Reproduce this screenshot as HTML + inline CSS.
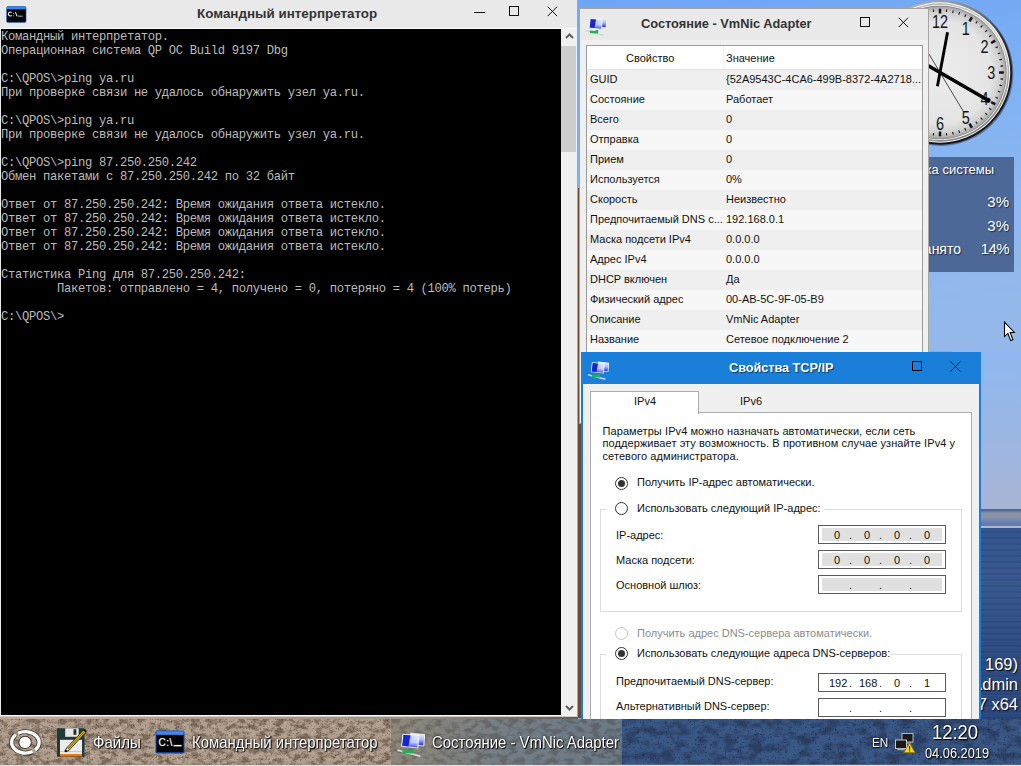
<!DOCTYPE html>
<html><head><meta charset="utf-8">
<style>
*{margin:0;padding:0;box-sizing:border-box}
html,body{width:1021px;height:766px;overflow:hidden;background:#6ca4f4;font-family:"Liberation Sans",sans-serif}
.a{position:absolute}
.t{position:absolute;white-space:pre;line-height:1}
/* wallpaper */
#wall{left:0;top:0;width:1021px;height:766px;background:linear-gradient(172deg,#6aa2f4 0px,#72a8f4 120px,#84b4f2 260px,#8eb8f0 350px,#94b8ea 450px)}
#strip{left:578px;top:188px;width:3px;height:530px;background:#6a4a30}
#lake{left:981px;top:352px;width:40px;height:367px;background:repeating-linear-gradient(180deg,rgba(255,255,255,0) 0px,rgba(255,255,255,0) 3px,rgba(10,20,60,0.18) 4px,rgba(120,150,210,0.12) 6px) 0 176px/100% 191px no-repeat,linear-gradient(180deg,#8eb8f0 0px,#98b6e6 60px,#a2b6dc 120px,#a8b4d4 157px,#4a6290 157px,#56709c 159px,#8a92a6 161px,#8c94a8 165px,#6a80b4 170px,#6078b0 174px,#b8bcc6 174px,#b0b4c0 176px,#34548e 176px,#38588e 230px,#2e4c82 300px,#2a487c 367px)}
/* cmd window */
#cmd{left:0;top:0;width:578px;height:717px;background:#e9e9e9;border-right:1px solid #a8a4a0}
#con{left:1px;top:29px;width:560px;height:686px;background:#000}
#conline{left:0;top:28px;width:577px;height:1px;background:#fafafa}
#conbot{left:0;top:715px;width:577px;height:1px;background:#fafafa}
#conbot2{left:0;top:716px;width:577px;height:1px;background:#c8c8c8}
#sb{left:561px;top:29px;width:16px;height:686px;background:#f0f0f0}
#thumb{left:561px;top:46px;width:15px;height:106px;background:#cdcdcd}
.mono{font-family:"Liberation Mono",monospace;font-size:12.2px;letter-spacing:-0.32px;color:#bcbcbc;line-height:14px;white-space:pre}
/* status window */
#st{left:579px;top:8px;width:350px;height:416px;background:#f0f0f0;border:1px solid #a8a4a0}
#sttitle{left:580px;top:9px;width:348px;height:31px;background:#e9e9e9}
#tbl{left:586px;top:45px;width:337px;height:310px;background:#fff;border:1px solid #9a9a9a}
.row{position:absolute;left:587px;width:335px;height:20px}
.nm{position:absolute;left:590px;font-size:11px;color:#111;white-space:pre;line-height:1}
.vl{position:absolute;left:726px;font-size:11px;color:#111;white-space:pre;line-height:1}
/* tcp window */
#tcp{left:581px;top:352px;width:400px;height:380px;background:#1a7fd8}
#tcpbody{left:583px;top:384px;width:396px;height:340px;background:#f0f0f0}
.ui{position:absolute;font-size:11px;color:#111;white-space:pre;line-height:1}
.radio{position:absolute;width:13px;height:13px;border-radius:50%;border:1px solid #333;background:#fff}
.radio.on::after{content:"";position:absolute;left:2px;top:2px;width:7px;height:7px;border-radius:50%;background:#333}
.ipbox{position:absolute;left:818px;width:128px;height:19px;border:1px solid #5a5a5a;background:#fff}
.ipfill{position:absolute;left:3px;top:2px;width:120px;height:13px;background:#e0e0e0}
.ipt{position:absolute;font-size:11px;color:#111;line-height:1;white-space:pre}
.grp{position:absolute;border:1px solid #dcdcdc}
/* taskbar */
#task{left:0;top:717px;width:1021px;height:49px;background:linear-gradient(90deg,#9a8474 0%,#a08a7a 30%,#8c7e74 38%,#6e7a82 45%,#5c6e80 60%,#344a6a 62%,#2e4468 100%)}
.tb{position:absolute;font-size:15px;color:#fff;white-space:pre;line-height:1;text-shadow:1px 1px 1px #000,0 0 2px #000}
</style></head><body>
<svg width="0" height="0" style="position:absolute"><defs>
<linearGradient id="mon" x1="0" y1="0" x2="1" y2="0.15"><stop offset="0" stop-color="#1828c0"/><stop offset="0.48" stop-color="#0a20e0"/><stop offset="0.56" stop-color="#c4d0ff"/><stop offset="1" stop-color="#dce4ff"/></linearGradient>
<linearGradient id="monv" x1="0" y1="0" x2="0" y2="1"><stop offset="0" stop-color="#fff" stop-opacity="0"/><stop offset="0.6" stop-color="#2030e0" stop-opacity="0.1"/><stop offset="1" stop-color="#1020d0" stop-opacity="0.75"/></linearGradient>
<linearGradient id="mon2" x1="0" y1="0" x2="0" y2="1"><stop offset="0" stop-color="#e4eaff"/><stop offset="0.5" stop-color="#a8b8ff"/><stop offset="1" stop-color="#2030d8"/></linearGradient>
<symbol id="net" viewBox="0 0 22 20">
<polygon points="10.8,1.6 22.2,2.8 21.4,12.1 10.5,11" fill="#f2f0e8"/>
<polygon points="11.6,2.5 21.4,3.6 20.7,11.2 11.3,10.2" fill="url(#mon2)"/>
<polygon points="4.9,2.3 17.6,3.3 16.9,13.6 3.9,12.1" fill="#f4f2ea"/>
<polygon points="5.6,3.1 16.8,4 16.2,12.8 4.7,11.4" fill="url(#mon)"/>
<polygon points="5.6,3.1 16.8,4 16.2,12.8 4.7,11.4" fill="url(#monv)"/>
<path d="M1 14.8 L18.5 19.3" stroke="#d0d4d4" stroke-width="1.4"/>
<polygon points="4.8,14.6 9.5,15 12.5,13.8 13.3,14.6 13,17.4 9.5,17.2 5,17.2" fill="#22b050"/>
</symbol>
<symbol id="cmdic" viewBox="0 0 30 24">
<rect x="0.5" y="0.5" width="29" height="23" rx="1.5" fill="#1a4ab0"/>
<rect x="1.5" y="1.3" width="27" height="3.6" fill="#3a8cf0"/>
<rect x="1.5" y="4.9" width="27" height="17.3" fill="#000"/>
<text x="3.6" y="16.2" font-family="Liberation Sans" font-size="10" letter-spacing="0.5" fill="#fff" stroke="#fff" stroke-width="0.2">C:\</text><rect x="18.6" y="14.9" width="8" height="1.5" fill="#fff"/>
</symbol>
</defs></svg>
<div id="wall" class="a"></div>
<div id="strip" class="a"></div>
<div id="lake" class="a"></div>

<svg class="a" style="left:866.5px;top:-1px" width="150" height="150" viewBox="0 0 150 150">
<defs>
<linearGradient id="bzo" x1="0.1" y1="0" x2="0.7" y2="1"><stop offset="0" stop-color="#c8c8c8"/><stop offset="0.3" stop-color="#8a8a8a"/><stop offset="0.55" stop-color="#2e2e2e"/><stop offset="1" stop-color="#101010"/></linearGradient>
<linearGradient id="bzm" x1="0.2" y1="0" x2="0.8" y2="1"><stop offset="0" stop-color="#b0b0b0"/><stop offset="0.5" stop-color="#d8d8d8"/><stop offset="1" stop-color="#707070"/></linearGradient>
<radialGradient id="face" cx="0.5" cy="0.5" r="0.5"><stop offset="0" stop-color="#ececec"/><stop offset="0.78" stop-color="#e4e4e4"/><stop offset="0.92" stop-color="#d0d0d0"/><stop offset="1" stop-color="#a4a4a4"/></radialGradient>
</defs>
<circle cx="73.8" cy="74.3" r="72.6" fill="#000" opacity="0.35"/>
<circle cx="73" cy="73.5" r="72.2" fill="url(#bzo)"/>
<circle cx="73" cy="73.5" r="70.2" fill="#f6f6f6"/>
<circle cx="73" cy="73.5" r="69.2" fill="url(#bzm)"/>
<circle cx="73" cy="73.5" r="67.6" fill="#fafafa"/>
<circle cx="73" cy="73.5" r="66.7" fill="#808080"/>
<circle cx="73" cy="73.5" r="66" fill="url(#face)"/>

<line x1="73.00" y1="14.50" x2="73.00" y2="9.70" stroke="#111" stroke-width="2.5"/>
<line x1="79.36" y1="13.03" x2="79.63" y2="10.45" stroke="#111" stroke-width="1.1"/>
<line x1="85.64" y1="14.03" x2="86.18" y2="11.49" stroke="#111" stroke-width="1.1"/>
<line x1="91.79" y1="15.68" x2="92.59" y2="13.20" stroke="#111" stroke-width="1.1"/>
<line x1="97.73" y1="17.96" x2="98.79" y2="15.58" stroke="#111" stroke-width="1.1"/>
<line x1="102.50" y1="22.40" x2="104.90" y2="18.25" stroke="#111" stroke-width="2.5"/>
<line x1="108.74" y1="24.31" x2="110.27" y2="22.21" stroke="#111" stroke-width="1.1"/>
<line x1="113.68" y1="28.32" x2="115.42" y2="26.38" stroke="#111" stroke-width="1.1"/>
<line x1="118.18" y1="32.82" x2="120.12" y2="31.08" stroke="#111" stroke-width="1.1"/>
<line x1="122.19" y1="37.76" x2="124.29" y2="36.23" stroke="#111" stroke-width="1.1"/>
<line x1="124.10" y1="44.00" x2="128.25" y2="41.60" stroke="#111" stroke-width="2.5"/>
<line x1="128.54" y1="48.77" x2="130.92" y2="47.71" stroke="#111" stroke-width="1.1"/>
<line x1="130.82" y1="54.71" x2="133.30" y2="53.91" stroke="#111" stroke-width="1.1"/>
<line x1="132.47" y1="60.86" x2="135.01" y2="60.32" stroke="#111" stroke-width="1.1"/>
<line x1="133.47" y1="67.14" x2="136.05" y2="66.87" stroke="#111" stroke-width="1.1"/>
<line x1="132.00" y1="73.50" x2="136.80" y2="73.50" stroke="#111" stroke-width="2.5"/>
<line x1="133.47" y1="79.86" x2="136.05" y2="80.13" stroke="#111" stroke-width="1.1"/>
<line x1="132.47" y1="86.14" x2="135.01" y2="86.68" stroke="#111" stroke-width="1.1"/>
<line x1="130.82" y1="92.29" x2="133.30" y2="93.09" stroke="#111" stroke-width="1.1"/>
<line x1="128.54" y1="98.23" x2="130.92" y2="99.29" stroke="#111" stroke-width="1.1"/>
<line x1="124.10" y1="103.00" x2="128.25" y2="105.40" stroke="#111" stroke-width="2.5"/>
<line x1="122.19" y1="109.24" x2="124.29" y2="110.77" stroke="#111" stroke-width="1.1"/>
<line x1="118.18" y1="114.18" x2="120.12" y2="115.92" stroke="#111" stroke-width="1.1"/>
<line x1="113.68" y1="118.68" x2="115.42" y2="120.62" stroke="#111" stroke-width="1.1"/>
<line x1="108.74" y1="122.69" x2="110.27" y2="124.79" stroke="#111" stroke-width="1.1"/>
<line x1="102.50" y1="124.60" x2="104.90" y2="128.75" stroke="#111" stroke-width="2.5"/>
<line x1="97.73" y1="129.04" x2="98.79" y2="131.42" stroke="#111" stroke-width="1.1"/>
<line x1="91.79" y1="131.32" x2="92.59" y2="133.80" stroke="#111" stroke-width="1.1"/>
<line x1="85.64" y1="132.97" x2="86.18" y2="135.51" stroke="#111" stroke-width="1.1"/>
<line x1="79.36" y1="133.97" x2="79.63" y2="136.55" stroke="#111" stroke-width="1.1"/>
<line x1="73.00" y1="132.50" x2="73.00" y2="137.30" stroke="#111" stroke-width="2.5"/>
<line x1="66.64" y1="133.97" x2="66.37" y2="136.55" stroke="#111" stroke-width="1.1"/>
<line x1="60.36" y1="132.97" x2="59.82" y2="135.51" stroke="#111" stroke-width="1.1"/>
<line x1="54.21" y1="131.32" x2="53.41" y2="133.80" stroke="#111" stroke-width="1.1"/>
<line x1="48.27" y1="129.04" x2="47.21" y2="131.42" stroke="#111" stroke-width="1.1"/>
<line x1="43.50" y1="124.60" x2="41.10" y2="128.75" stroke="#111" stroke-width="2.5"/>
<line x1="37.26" y1="122.69" x2="35.73" y2="124.79" stroke="#111" stroke-width="1.1"/>
<line x1="32.32" y1="118.68" x2="30.58" y2="120.62" stroke="#111" stroke-width="1.1"/>
<line x1="27.82" y1="114.18" x2="25.88" y2="115.92" stroke="#111" stroke-width="1.1"/>
<line x1="23.81" y1="109.24" x2="21.71" y2="110.77" stroke="#111" stroke-width="1.1"/>
<line x1="21.90" y1="103.00" x2="17.75" y2="105.40" stroke="#111" stroke-width="2.5"/>
<line x1="17.46" y1="98.23" x2="15.08" y2="99.29" stroke="#111" stroke-width="1.1"/>
<line x1="15.18" y1="92.29" x2="12.70" y2="93.09" stroke="#111" stroke-width="1.1"/>
<line x1="13.53" y1="86.14" x2="10.99" y2="86.68" stroke="#111" stroke-width="1.1"/>
<line x1="12.53" y1="79.86" x2="9.95" y2="80.13" stroke="#111" stroke-width="1.1"/>
<line x1="14.00" y1="73.50" x2="9.20" y2="73.50" stroke="#111" stroke-width="2.5"/>
<line x1="12.53" y1="67.14" x2="9.95" y2="66.87" stroke="#111" stroke-width="1.1"/>
<line x1="13.53" y1="60.86" x2="10.99" y2="60.32" stroke="#111" stroke-width="1.1"/>
<line x1="15.18" y1="54.71" x2="12.70" y2="53.91" stroke="#111" stroke-width="1.1"/>
<line x1="17.46" y1="48.77" x2="15.08" y2="47.71" stroke="#111" stroke-width="1.1"/>
<line x1="21.90" y1="44.00" x2="17.75" y2="41.60" stroke="#111" stroke-width="2.5"/>
<line x1="23.81" y1="37.76" x2="21.71" y2="36.23" stroke="#111" stroke-width="1.1"/>
<line x1="27.82" y1="32.82" x2="25.88" y2="31.08" stroke="#111" stroke-width="1.1"/>
<line x1="32.32" y1="28.32" x2="30.58" y2="26.38" stroke="#111" stroke-width="1.1"/>
<line x1="37.26" y1="24.31" x2="35.73" y2="22.21" stroke="#111" stroke-width="1.1"/>
<line x1="43.50" y1="22.40" x2="41.10" y2="18.25" stroke="#111" stroke-width="2.5"/>
<line x1="48.27" y1="17.96" x2="47.21" y2="15.58" stroke="#111" stroke-width="1.1"/>
<line x1="54.21" y1="15.68" x2="53.41" y2="13.20" stroke="#111" stroke-width="1.1"/>
<line x1="60.36" y1="14.03" x2="59.82" y2="11.49" stroke="#111" stroke-width="1.1"/>
<line x1="66.64" y1="13.03" x2="66.37" y2="10.45" stroke="#111" stroke-width="1.1"/>
<text transform="translate(98.65,35.67) scale(0.78,1)" text-anchor="middle" font-family="Liberation Sans" font-size="18.5" fill="#151515">1</text>
<text transform="translate(117.43,54.45) scale(0.78,1)" text-anchor="middle" font-family="Liberation Sans" font-size="18.5" fill="#151515">2</text>
<text transform="translate(124.30,80.10) scale(0.78,1)" text-anchor="middle" font-family="Liberation Sans" font-size="18.5" fill="#151515">3</text>
<text transform="translate(117.43,105.75) scale(0.78,1)" text-anchor="middle" font-family="Liberation Sans" font-size="18.5" fill="#151515">4</text>
<text transform="translate(98.65,124.53) scale(0.78,1)" text-anchor="middle" font-family="Liberation Sans" font-size="18.5" fill="#151515">5</text>
<text transform="translate(73.00,131.40) scale(0.78,1)" text-anchor="middle" font-family="Liberation Sans" font-size="18.5" fill="#151515">6</text>
<text transform="translate(47.35,124.53) scale(0.78,1)" text-anchor="middle" font-family="Liberation Sans" font-size="18.5" fill="#151515">7</text>
<text transform="translate(28.57,105.75) scale(0.78,1)" text-anchor="middle" font-family="Liberation Sans" font-size="18.5" fill="#151515">8</text>
<text transform="translate(21.70,80.10) scale(0.78,1)" text-anchor="middle" font-family="Liberation Sans" font-size="18.5" fill="#151515">9</text>
<text transform="translate(28.57,54.45) scale(0.78,1)" text-anchor="middle" font-family="Liberation Sans" font-size="18.5" fill="#151515">10</text>
<text transform="translate(47.35,35.67) scale(0.78,1)" text-anchor="middle" font-family="Liberation Sans" font-size="18.5" fill="#151515">11</text>
<text transform="translate(73.00,28.80) scale(0.78,1)" text-anchor="middle" font-family="Liberation Sans" font-size="18.5" fill="#151515">12</text>
<line x1="70.42" y1="87.26" x2="80.54" y2="33.20" stroke="#000" stroke-width="2.9" stroke-linecap="butt"/>
<line x1="55.68" y1="63.50" x2="122.36" y2="102.00" stroke="#000" stroke-width="3.6" stroke-linecap="butt"/><circle cx="121.06" cy="101.25" r="2.5" fill="#000"/>
<line x1="61.67" y1="54.64" x2="96.69" y2="112.93" stroke="#222" stroke-width="0.8" stroke-linecap="butt"/>
</svg>
<div class="a" style="left:880px;top:157px;width:134px;height:115px;background:#4b6896"></div>
<div class="t" style="left:880px;top:162.6px;width:114px;text-align:right;font-size:13px;color:#fff;text-shadow:1px 1px 1px #1a2a40">Загрузка системы</div>
<div class="t" style="left:880px;top:194px;width:129px;text-align:right;font-size:15px;color:#fff;text-shadow:1px 1px 1px #1a2a40">3%</div>
<div class="t" style="left:880px;top:217.8px;width:129px;text-align:right;font-size:15px;color:#fff;text-shadow:1px 1px 1px #1a2a40">3%</div>
<div class="t" style="left:880px;top:241.4px;width:129px;text-align:right;font-size:15px;letter-spacing:-0.6px;color:#fff;text-shadow:1px 1px 1px #1a2a40">14%</div>
<div class="t" style="left:880px;top:241.6px;width:81px;text-align:right;font-size:14px;color:#fff;text-shadow:1px 1px 1px #1a2a40">Занято</div>
<div class="t" style="left:900px;top:656.2px;width:118px;text-align:right;font-size:16.5px;color:#fff;text-shadow:1px 1px 1px #000">(10.0.2. 169)</div>
<div class="t" style="left:900px;top:676.2px;width:118px;text-align:right;font-size:16.5px;color:#fff;text-shadow:1px 1px 1px #000">Admin</div>
<div class="t" style="left:900px;top:696px;width:118px;text-align:right;font-size:16.5px;color:#fff;text-shadow:1px 1px 1px #000">Win7 x64</div>

<!-- CMD window -->
<div id="cmd" class="a"></div>
<div id="conline" class="a"></div>
<div id="con" class="a"></div>
<div id="conbot" class="a"></div>
<div id="conbot2" class="a"></div>
<div id="sb" class="a"></div>
<div id="thumb" class="a"></div>
<svg class="a" style="left:6px;top:6px" width="21" height="17" viewBox="0 0 21 17">
<rect x="0.3" y="0.3" width="20" height="16.4" rx="1.6" fill="#1a4aa8"/>
<rect x="1" y="0.8" width="18.6" height="2.6" fill="#2e8cf0"/>
<rect x="1" y="3.4" width="18.6" height="12.4" fill="#000"/>
<path d="M5.7 6.7 A1.9 2 0 1 0 5.7 9.3" stroke="#e8e8e8" stroke-width="1.2" fill="none"/>
<rect x="7.2" y="7" width="0.9" height="0.9" fill="#ccc"/><rect x="7.2" y="9.4" width="0.9" height="0.9" fill="#ccc"/>
<path d="M9.4 6 L11 10.2" stroke="#e0e0e0" stroke-width="1.1"/>
<rect x="11.8" y="9.7" width="5" height="0.9" fill="#ccc"/>
</svg>
<div class="a" style="left:474px;top:12px;width:11px;height:1px;background:#111"></div>
<div class="a" style="left:509px;top:6px;width:10px;height:10px;border:1px solid #111"></div>
<svg class="a" style="left:546.5px;top:5.5px" width="11" height="11"><path d="M0.7 0.7L10.1 10.1M10.1 0.7L0.7 10.1" stroke="#111" stroke-width="1"/></svg>
<svg class="a" style="left:564.5px;top:32px" width="9" height="8"><path d="M1 6L4.5 2.5L8 6" stroke="#606060" stroke-width="2" fill="none"/></svg>
<svg class="a" style="left:564.5px;top:704px" width="9" height="8"><path d="M1 2L4.5 5.5L8 2" stroke="#606060" stroke-width="2" fill="none"/></svg>
<div class="t" style="left:197px;top:6.5px;font-size:13.4px;font-weight:bold;color:#333">Командный интерпретатор</div>
<pre class="a mono" style="left:1px;top:29.5px">Командный интерпретатор.
Операционная система QP OC Build 9197 Dbg

C:\QPOS\>ping ya.ru
При проверке связи не удалось обнаружить узел ya.ru.

C:\QPOS\>ping ya.ru
При проверке связи не удалось обнаружить узел ya.ru.

C:\QPOS\>ping 87.250.250.242
Обмен пакетами с 87.250.250.242 по 32 байт

Ответ от 87.250.250.242: Время ожидания ответа истекло.
Ответ от 87.250.250.242: Время ожидания ответа истекло.
Ответ от 87.250.250.242: Время ожидания ответа истекло.
Ответ от 87.250.250.242: Время ожидания ответа истекло.

Статистика Ping для 87.250.250.242:
        Пакетов: отправлено = 4, получено = 0, потеряно = 4 (100% потерь)

C:\QPOS\></pre>

<!-- Status window -->
<div id="st" class="a"></div>
<div id="sttitle" class="a"></div>
<div id="tbl" class="a"></div>
<div class="a" style="left:587px;top:46px;width:335px;height:23px;background:#fff"></div>
<div class="a" style="left:588px;top:69px;width:334px;height:1px;background:#e2e2e2"></div>
<div class="a" style="left:723px;top:46px;width:1px;height:23px;background:#f0f0f0"></div>
<div class="nm" style="left:626px;top:52.6px">Свойство</div><div class="vl" style="top:52.6px">Значение</div>
<div class="row" style="top:70px;background:#efefef"></div>
<div class="nm" style="top:73.7px">GUID</div><div class="vl" style="top:73.7px">{52A9543C-4CA6-499B-8372-4A2718...</div>
<div class="row" style="top:90px;background:#f7f7f7"></div>
<div class="nm" style="top:93.7px">Состояние</div><div class="vl" style="top:93.7px">Работает</div>
<div class="row" style="top:110px;background:#efefef"></div>
<div class="nm" style="top:113.7px">Всего</div><div class="vl" style="top:113.7px">0</div>
<div class="row" style="top:130px;background:#f7f7f7"></div>
<div class="nm" style="top:133.7px">Отправка</div><div class="vl" style="top:133.7px">0</div>
<div class="row" style="top:150px;background:#efefef"></div>
<div class="nm" style="top:153.7px">Прием</div><div class="vl" style="top:153.7px">0</div>
<div class="row" style="top:170px;background:#f7f7f7"></div>
<div class="nm" style="top:173.7px">Используется</div><div class="vl" style="top:173.7px">0%</div>
<div class="row" style="top:190px;background:#efefef"></div>
<div class="nm" style="top:193.7px">Скорость</div><div class="vl" style="top:193.7px">Неизвестно</div>
<div class="row" style="top:210px;background:#f7f7f7"></div>
<div class="nm" style="top:213.7px">Предпочитаемый DNS с...</div><div class="vl" style="top:213.7px">192.168.0.1</div>
<div class="row" style="top:230px;background:#efefef"></div>
<div class="nm" style="top:233.7px">Маска подсети IPv4</div><div class="vl" style="top:233.7px">0.0.0.0</div>
<div class="row" style="top:250px;background:#f7f7f7"></div>
<div class="nm" style="top:253.7px">Адрес IPv4</div><div class="vl" style="top:253.7px">0.0.0.0</div>
<div class="row" style="top:270px;background:#efefef"></div>
<div class="nm" style="top:273.7px">DHCP включен</div><div class="vl" style="top:273.7px">Да</div>
<div class="row" style="top:290px;background:#f7f7f7"></div>
<div class="nm" style="top:293.7px">Физический адрес</div><div class="vl" style="top:293.7px">00-AB-5C-9F-05-B9</div>
<div class="row" style="top:310px;background:#efefef"></div>
<div class="nm" style="top:313.7px">Описание</div><div class="vl" style="top:313.7px">VmNic Adapter</div>
<div class="row" style="top:330px;background:#f7f7f7"></div>
<div class="nm" style="top:333.7px">Название</div><div class="vl" style="top:333.7px">Сетевое подключение 2</div>
<svg class="a" style="left:585px;top:16px" width="22" height="20"><use href="#net" width="22" height="20"/></svg>
<div class="a" style="left:860px;top:17px;width:10px;height:10px;border:1px solid #111"></div>
<svg class="a" style="left:897.5px;top:16.8px" width="11" height="11"><path d="M0.7 0.7L10.1 10.1M10.1 0.7L0.7 10.1" stroke="#111" stroke-width="1"/></svg>
<div class="t" style="left:641px;top:18px;font-size:12.8px;font-weight:bold;color:#333">Состояние - VmNic Adapter</div>

<!-- TCP window -->
<div class="a" style="left:928px;top:351px;width:24px;height:1px;background:#a8a4a0"></div>
<div id="tcp" class="a"></div>
<div id="tcpbody" class="a"></div>
<div class="a" style="left:581px;top:384px;width:2px;height:340px;background:#1a7fd8"></div>
<!-- tabs -->
<div class="a" style="left:590px;top:412px;width:382px;height:320px;background:#fff;border:1px solid #adadad"></div>
<div class="a" style="left:590px;top:391px;width:109px;height:23px;background:#fff;border:1px solid #adadad;border-bottom:none"></div>
<div class="ui" style="left:634px;top:395.8px">IPv4</div>
<div class="ui" style="left:740px;top:395.8px">IPv6</div>
<div class="ui" style="left:602.5px;top:424.7px;line-height:12.5px;letter-spacing:0.08px">Параметры IPv4 можно назначать автоматически, если сеть
поддерживает эту возможность. В противном случае узнайте IPv4 у
сетевого администратора.</div>
<div class="radio on" style="left:615px;top:477px"></div>
<div class="ui" style="left:637px;top:477.4px">Получить IP-адрес автоматически.</div>
<div class="grp" style="left:600px;top:509px;width:362px;height:103px"></div>
<div class="a" style="left:606px;top:500px;width:218px;height:16px;background:#fff"></div>
<div class="radio" style="left:615px;top:502px"></div>
<div class="ui" style="left:637px;top:502.5px">Использовать следующий IP-адрес:</div>
<div class="ui" style="left:616px;top:530.3px">IP-адрес:</div>
<div class="ui" style="left:616px;top:555.3px">Маска подсети:</div>
<div class="ui" style="left:616px;top:580.3px">Основной шлюз:</div>
<div class="ipbox" style="top:525px"><div class="ipfill"></div><div class="ipt" style="left:15px;top:3.5px">0</div><div class="ipt" style="left:30px;top:3.5px">.</div><div class="ipt" style="left:45px;top:3.5px">0</div><div class="ipt" style="left:60px;top:3.5px">.</div><div class="ipt" style="left:75px;top:3.5px">0</div><div class="ipt" style="left:90px;top:3.5px">.</div><div class="ipt" style="left:105px;top:3.5px">0</div></div>
<div class="ipbox" style="top:550px"><div class="ipfill"></div><div class="ipt" style="left:15px;top:3.5px">0</div><div class="ipt" style="left:30px;top:3.5px">.</div><div class="ipt" style="left:45px;top:3.5px">0</div><div class="ipt" style="left:60px;top:3.5px">.</div><div class="ipt" style="left:75px;top:3.5px">0</div><div class="ipt" style="left:90px;top:3.5px">.</div><div class="ipt" style="left:105px;top:3.5px">0</div></div>
<div class="ipbox" style="top:575px"><div class="ipfill"></div><div class="ipt" style="left:30px;top:3.5px">.</div><div class="ipt" style="left:60px;top:3.5px">.</div><div class="ipt" style="left:90px;top:3.5px">.</div></div>
<div class="radio" style="left:615px;top:627px;border-color:#c4c4c4"></div>
<div class="ui" style="left:637px;top:627.5px;color:#8c8c8c">Получить адрес DNS-сервера автоматически.</div>
<div class="grp" style="left:600px;top:654px;width:362px;height:80px"></div>
<div class="a" style="left:606px;top:645px;width:284px;height:16px;background:#fff"></div>
<div class="radio on" style="left:615px;top:647px"></div>
<div class="ui" style="left:637px;top:647.7px">Использовать следующие адреса DNS-серверов:</div>
<div class="ui" style="left:616px;top:676.1px">Предпочитаемый DNS-сервер:</div>
<div class="ui" style="left:616px;top:700.7px">Альтернативный DNS-сервер:</div>
<div class="ipbox" style="top:673px"><div class="ipt" style="left:10px;top:3.5px">192</div><div class="ipt" style="left:30px;top:3.5px">.</div><div class="ipt" style="left:40px;top:3.5px">168</div><div class="ipt" style="left:60px;top:3.5px">.</div><div class="ipt" style="left:75px;top:3.5px">0</div><div class="ipt" style="left:90px;top:3.5px">.</div><div class="ipt" style="left:105px;top:3.5px">1</div></div>
<div class="ipbox" style="top:698px"><div class="ipt" style="left:30px;top:3.5px">.</div><div class="ipt" style="left:60px;top:3.5px">.</div><div class="ipt" style="left:90px;top:3.5px">.</div></div>
<svg class="a" style="left:587px;top:360px" width="22" height="20"><use href="#net" width="22" height="20"/></svg>
<div class="a" style="left:912px;top:361px;width:10px;height:10px;border:1px solid #000"></div>
<svg class="a" style="left:949.5px;top:360.5px" width="11" height="11"><path d="M0.5 0.5L10.5 10.5M10.5 0.5L0.5 10.5" stroke="#000" stroke-width="1"/></svg>
<div class="t" style="left:729px;top:362px;font-size:12.65px;font-weight:bold;color:#fff;text-shadow:1px 1px 1px rgba(0,0,0,0.55)">Свойства TCP/IP</div>

<!-- taskbar -->
<div class="a" style="left:0;top:717px;width:578px;height:2px;background:linear-gradient(90deg,#c8a890,#b89880 40%,#a09080 70%,#6a5a50)"></div>
<svg class="a" style="left:0;top:719px" width="1021" height="47" viewBox="0 0 1021 47">
<defs>
<filter id="gran" x="0" y="0" width="100%" height="100%" color-interpolation-filters="sRGB"><feTurbulence type="fractalNoise" baseFrequency="0.12 0.2" numOctaves="4" seed="7"/><feColorMatrix type="matrix" values="0 0 0 0 0.2  0 0 0 0 0.13  0 0 0 0 0.08  0 0 0 -4.2 2.4"/></filter>
<filter id="gran2" x="0" y="0" width="100%" height="100%" color-interpolation-filters="sRGB"><feTurbulence type="fractalNoise" baseFrequency="0.08 0.12" numOctaves="3" seed="11"/><feColorMatrix type="matrix" values="0 0 0 0 0.1  0 0 0 0 0.13  0 0 0 0 0.22  0 0 0 -3.2 1.9"/></filter>
<filter id="speck" x="0" y="0" width="100%" height="100%" color-interpolation-filters="sRGB"><feTurbulence type="turbulence" baseFrequency="0.45" numOctaves="1" seed="21"/><feColorMatrix type="matrix" values="0 0 0 0 0.2  0 0 0 0 0.13  0 0 0 0 0.08  0 0 0 9 -2.8"/></filter>
<filter id="speck2" x="0" y="0" width="100%" height="100%" color-interpolation-filters="sRGB"><feTurbulence type="turbulence" baseFrequency="0.4" numOctaves="1" seed="33"/><feColorMatrix type="matrix" values="0 0 0 0 0.1  0 0 0 0 0.14  0 0 0 0 0.25  0 0 0 9 -2.8"/></filter>
<filter id="gran3" x="0" y="0" width="100%" height="100%" color-interpolation-filters="sRGB"><feTurbulence type="fractalNoise" baseFrequency="0.18" numOctaves="3" seed="5"/><feColorMatrix type="matrix" values="0 0 0 0 0.8  0 0 0 0 0.71  0 0 0 0 0.63  0 0 0 3.2 -1.7"/></filter>
</defs>
<rect x="0" y="0" width="391" height="47" fill="#b09e8e"/>
<rect x="0" y="0" width="391" height="47" fill="#000" filter="url(#gran)" opacity="0.42"/>
<rect x="0" y="0" width="391" height="47" filter="url(#gran3)" opacity="0.6"/>
<rect x="0" y="0" width="391" height="47" filter="url(#speck)" opacity="0.3"/>
<linearGradient id="hl" x1="0" x2="1" y1="0" y2="0"><stop offset="0" stop-color="#8e887c"/><stop offset="0.5" stop-color="#747e86"/><stop offset="1" stop-color="#6a7a88"/></linearGradient><rect x="391" y="0" width="231" height="47" fill="url(#hl)"/>
<rect x="391" y="0" width="231" height="47" filter="url(#gran)" opacity="0.25"/>
<rect x="622" y="0" width="399" height="47" fill="#3a5886"/>
<rect x="622" y="0" width="399" height="47" filter="url(#gran2)" opacity="0.45"/>
<rect x="622" y="0" width="399" height="47" filter="url(#speck2)" opacity="0.4"/>

<rect x="0" y="45" width="1021" height="1" fill="#808080" opacity="0.4"/>
<rect x="0" y="46" width="1021" height="1" fill="#e4e4e4"/>
</svg>
<div class="tb" style="left:92.5px;top:734.3px;font-size:16.5px;transform:scaleX(0.912);transform-origin:0 0">Файлы</div>
<div class="tb" style="left:191.5px;top:734.3px;font-size:16.5px;transform:scaleX(0.903);transform-origin:0 0">Командный интерпретатор</div>
<div class="tb" style="left:431.5px;top:734.3px;font-size:16.5px;transform:scaleX(0.903);transform-origin:0 0">Состояние - VmNic Adapter</div>
<div class="tb" style="left:871.5px;top:735.6px;font-size:13.5px;transform:scaleX(0.87);transform-origin:0 0">EN</div>
<div class="tb" style="left:932px;top:721.5px;font-size:20px;transform:scaleX(0.92);transform-origin:0 0">12:20</div>
<div class="tb" style="left:925px;top:746.2px;font-size:14px;transform:scaleX(0.914);transform-origin:0 0">04.06.2019</div>
<svg class="a" style="left:5px;top:725px" width="40" height="35" viewBox="0 0 40 35">
<path d="M13.11 8.28 A13.75 10.75 0 0 1 29.95 25.13" stroke="#1a1410" stroke-opacity="0.75" stroke-width="4.8" fill="none"/>
<path d="M27.69 26.52 A13.75 10.75 0 0 1 10.85 9.67" stroke="#1a1410" stroke-opacity="0.75" stroke-width="4.8" fill="none"/>
<circle cx="20.1" cy="17.4" r="6.6" fill="#1a1410" fill-opacity="0.75"/>
<path d="M13.11 8.28 A13.75 10.75 0 0 1 29.95 25.13" stroke="#fff" stroke-width="3.3" fill="none"/>
<path d="M27.69 26.52 A13.75 10.75 0 0 1 10.85 9.67" stroke="#fff" stroke-width="3.3" fill="none"/>
<circle cx="20.1" cy="17.4" r="5.7" fill="#fff"/>
</svg>
<svg class="a" style="left:57px;top:728px" width="32" height="29" viewBox="0 0 32 29">
<rect x="0" y="0.3" width="27.5" height="28.4" rx="0.8" fill="#1e3a3a"/>
<rect x="8.2" y="0.3" width="13.5" height="8.5" fill="#e6e6e6"/>
<rect x="16.5" y="1.3" width="2.8" height="5.5" fill="#2a2a2a"/>
<rect x="3" y="11.8" width="22" height="15" fill="#ececec"/>
<rect x="3" y="23.3" width="22" height="0.8" fill="#9a9a9a" opacity="0.6"/>
<rect x="3" y="26" width="22" height="2.4" fill="#e87a10"/>
<path d="M10.2 21.8 L27.6 3.2" stroke="#111" stroke-width="3.8" stroke-linecap="round"/>
<path d="M10.6 21.4 L27.4 3.4" stroke="#f2c418" stroke-width="2.6"/>
<path d="M10.6 21.4 L27.4 3.4" stroke="#2a2a10" stroke-width="0.7"/>
<path d="M8.4 23.6 L11 20.8" stroke="#e8d8a0" stroke-width="2"/>
<circle cx="8.8" cy="23" r="1.3" fill="#111"/>
</svg>
<svg class="a" style="left:155px;top:730px" width="30" height="24"><use href="#cmdic" width="30" height="24"/></svg>
<svg class="a" style="left:396px;top:730px" width="29" height="27.6" viewBox="0 0 29 27.6"><use href="#net" width="29" height="27.6" preserveAspectRatio="none"/></svg>
<svg class="a" style="left:894px;top:732px" width="22" height="21" viewBox="0 0 22 21">
<rect x="8" y="1.5" width="11" height="8.5" fill="#1a1a1a" stroke="#b8b8b8" stroke-width="1"/>
<rect x="10" y="10" width="7" height="1.5" fill="#999"/>
<rect x="1.5" y="8" width="11" height="8.5" fill="#1a1a1a" stroke="#c8c8c8" stroke-width="1"/>
<rect x="3.5" y="16.5" width="7" height="1.8" fill="#aaa"/>
<path d="M15.5 11 L21 20.5 L10 20.5 Z" fill="#f6d028" stroke="#9a7a00" stroke-width="0.7"/>
<rect x="15" y="14" width="1.1" height="3.6" fill="#222"/><rect x="15" y="18.2" width="1.1" height="1.2" fill="#222"/>
</svg>
<svg class="a" style="left:1003px;top:321px" width="14" height="23" viewBox="0 0 14 23">
<path d="M1.5 1.2 L1.5 15.6 L4.9 12.4 L7.6 19.6 L9.9 18.7 L7.2 11.6 L11.2 11.2 Z" fill="#fff" stroke="#000" stroke-width="1.1" stroke-linejoin="miter"/>
</svg>
</body></html>
